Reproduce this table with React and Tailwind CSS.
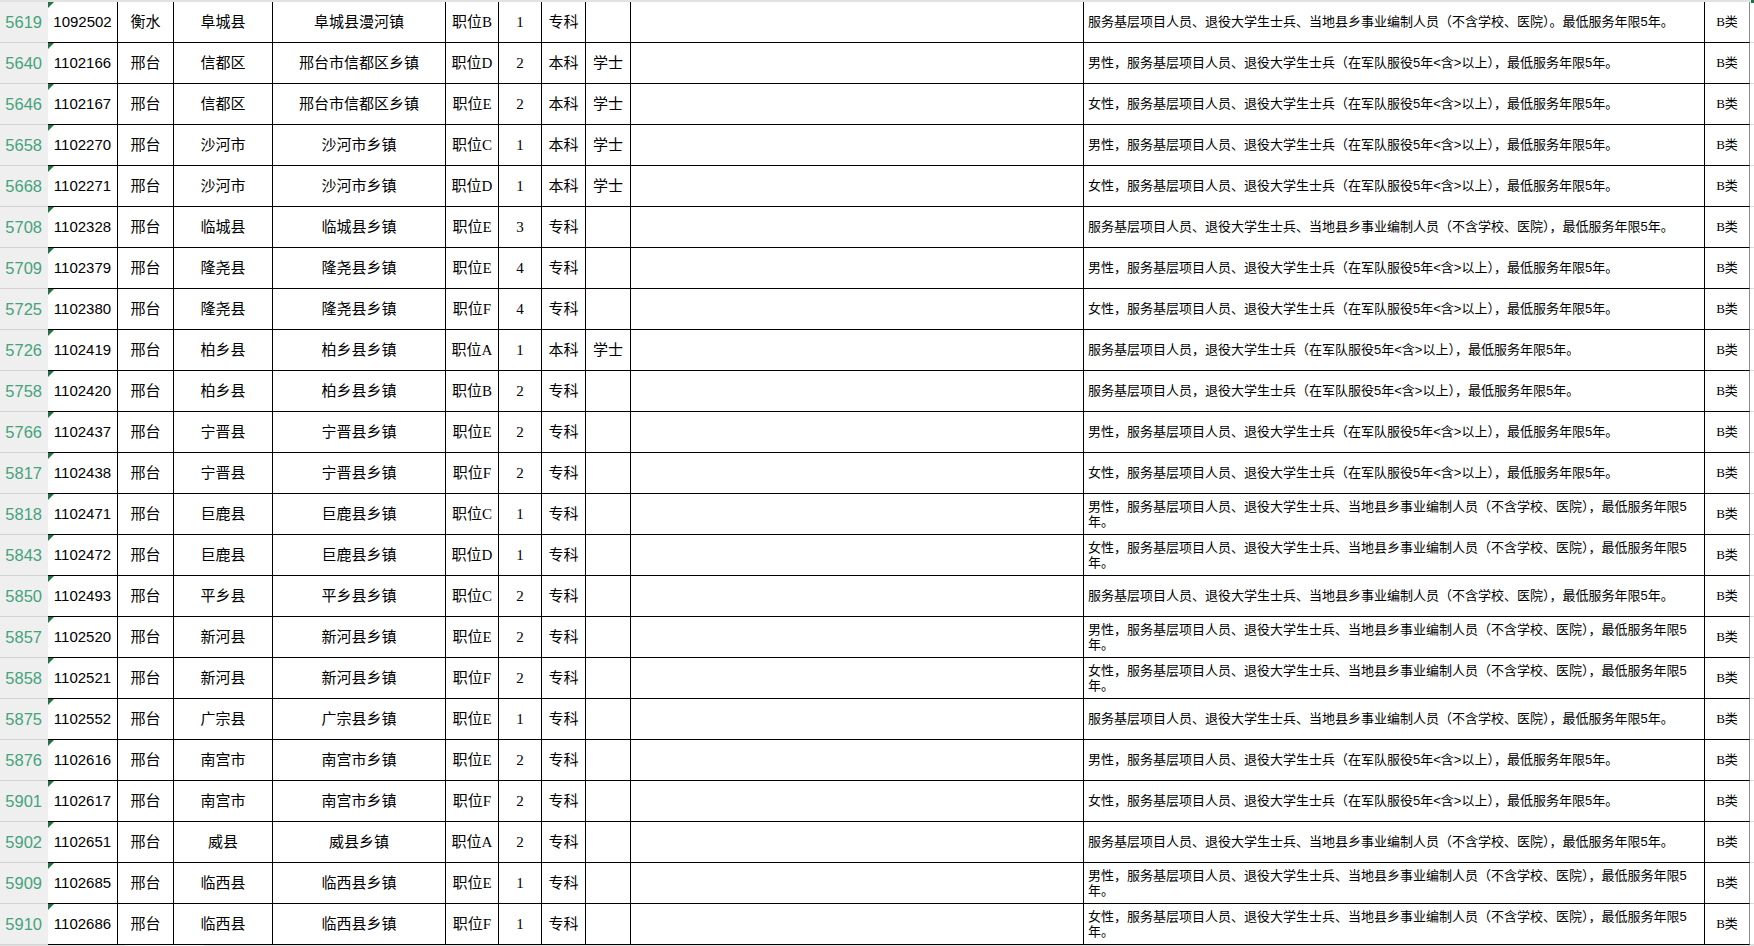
const A = "服务基层项目人员、退役大学生士兵、当地县乡事业编制人员（不含学校、医院），最低服务年限5年。";
const M = "男性，服务基层项目人员、退役大学生士兵（在军队服役5年<含>以上），最低服务年限5年。";
const F = "女性，服务基层项目人员、退役大学生士兵（在军队服役5年<含>以上），最低服务年限5年。";
const B = "服务基层项目人员，退役大学生士兵（在军队服役5年<含>以上），最低服务年限5年。";
const MW = ["男性，服务基层项目人员、退役大学生士兵、当地县乡事业编制人员（不含学校、医院），最低服务年限5", "年。"];
const FW = ["女性，服务基层项目人员、退役大学生士兵、当地县乡事业编制人员（不含学校、医院），最低服务年限5", "年。"];

const rows = [
  ["5619", "1092502", "衡水", "阜城县", "阜城县漫河镇", "职位B", "1", "专科", "", ["服务基层项目人员、退役大学生士兵、当地县乡事业编制人员（不含学校、医院）。最低服务年限5年。"]],
  ["5640", "1102166", "邢台", "信都区", "邢台市信都区乡镇", "职位D", "2", "本科", "学士", [M]],
  ["5646", "1102167", "邢台", "信都区", "邢台市信都区乡镇", "职位E", "2", "本科", "学士", [F]],
  ["5658", "1102270", "邢台", "沙河市", "沙河市乡镇", "职位C", "1", "本科", "学士", [M]],
  ["5668", "1102271", "邢台", "沙河市", "沙河市乡镇", "职位D", "1", "本科", "学士", [F]],
  ["5708", "1102328", "邢台", "临城县", "临城县乡镇", "职位E", "3", "专科", "", [A]],
  ["5709", "1102379", "邢台", "隆尧县", "隆尧县乡镇", "职位E", "4", "专科", "", [M]],
  ["5725", "1102380", "邢台", "隆尧县", "隆尧县乡镇", "职位F", "4", "专科", "", [F]],
  ["5726", "1102419", "邢台", "柏乡县", "柏乡县乡镇", "职位A", "1", "本科", "学士", [B]],
  ["5758", "1102420", "邢台", "柏乡县", "柏乡县乡镇", "职位B", "2", "专科", "", [B]],
  ["5766", "1102437", "邢台", "宁晋县", "宁晋县乡镇", "职位E", "2", "专科", "", [M]],
  ["5817", "1102438", "邢台", "宁晋县", "宁晋县乡镇", "职位F", "2", "专科", "", [F]],
  ["5818", "1102471", "邢台", "巨鹿县", "巨鹿县乡镇", "职位C", "1", "专科", "", MW],
  ["5843", "1102472", "邢台", "巨鹿县", "巨鹿县乡镇", "职位D", "1", "专科", "", FW],
  ["5850", "1102493", "邢台", "平乡县", "平乡县乡镇", "职位C", "2", "专科", "", [A]],
  ["5857", "1102520", "邢台", "新河县", "新河县乡镇", "职位E", "2", "专科", "", MW],
  ["5858", "1102521", "邢台", "新河县", "新河县乡镇", "职位F", "2", "专科", "", FW],
  ["5875", "1102552", "邢台", "广宗县", "广宗县乡镇", "职位E", "1", "专科", "", [A]],
  ["5876", "1102616", "邢台", "南宫市", "南宫市乡镇", "职位E", "2", "专科", "", [M]],
  ["5901", "1102617", "邢台", "南宫市", "南宫市乡镇", "职位F", "2", "专科", "", [F]],
  ["5902", "1102651", "邢台", "威县", "威县乡镇", "职位A", "2", "专科", "", [A]],
  ["5909", "1102685", "邢台", "临西县", "临西县乡镇", "职位E", "1", "专科", "", MW],
  ["5910", "1102686", "邢台", "临西县", "临西县乡镇", "职位F", "1", "专科", "", FW],
];

function Cell({ children, className = "" }) {
  return (
    <div className={"flex items-center justify-center border-r border-b border-black text-[15px] text-black whitespace-nowrap overflow-hidden " + className}>
      {children}
    </div>
  );
}

function Row({ r }) {
  return (
    <div className="grid h-[41px] grid-cols-[48px_70px_56px_99px_173px_53px_43px_44px_45px_453px_621px_45px_1fr]">
      <div className="flex items-center justify-end pr-[6px] bg-[#efefef] border-b border-[#d4d4d4] text-[16.5px] text-[#45a37b] font-['Liberation_Sans',sans-serif]">
        {r[0]}
      </div>
      <Cell className="relative text-[14px]">
        <span className="absolute left-0 top-0 w-0 h-0 border-t-[6px] border-t-[#217346] border-r-[6px] border-r-transparent" />
        {r[1]}
      </Cell>
      <Cell>{r[2]}</Cell>
      <Cell>{r[3]}</Cell>
      <Cell>{r[4]}</Cell>
      <Cell className="font-['Liberation_Serif','Noto_Sans_CJK_SC',serif]">{r[5]}</Cell>
      <Cell className="font-['Liberation_Serif',serif]">{r[6]}</Cell>
      <Cell>{r[7]}</Cell>
      <Cell>{r[8]}</Cell>
      <Cell />
      <div className="flex flex-col justify-center pl-[4px] border-r border-b border-black text-[13px] leading-[15.5px] text-black whitespace-nowrap overflow-hidden">
        {r[9].map((l, i) => (
          <div key={i}>{l}</div>
        ))}
      </div>
      <div className="flex items-center justify-center border-r border-b border-r-[#8a8a8a] border-b-black text-[13px] text-black font-['Liberation_Serif','Noto_Sans_CJK_SC',serif]">
        B类
      </div>
      <div className="border-b border-[#dadada] bg-white" />
    </div>
  );
}

export default function App() {
  return (
    <div className="h-[946px] w-[1754px] overflow-hidden bg-white font-['Liberation_Sans','Noto_Sans_CJK_SC',sans-serif]">
      <div className="relative h-[2px] bg-[#e2e2e2]">
        <span className="absolute right-0 top-0 h-[3px] w-[3px] bg-[#217346]" />
      </div>
      {rows.map((r) => (
        <Row key={r[0]} r={r} />
      ))}
      <div className="flex h-[3px] bg-[#e3e3e3]">
        <div className="w-[125px]" />
        <div className="w-[79px] bg-[#f6f6f6]" />
      </div>
    </div>
  );
}
